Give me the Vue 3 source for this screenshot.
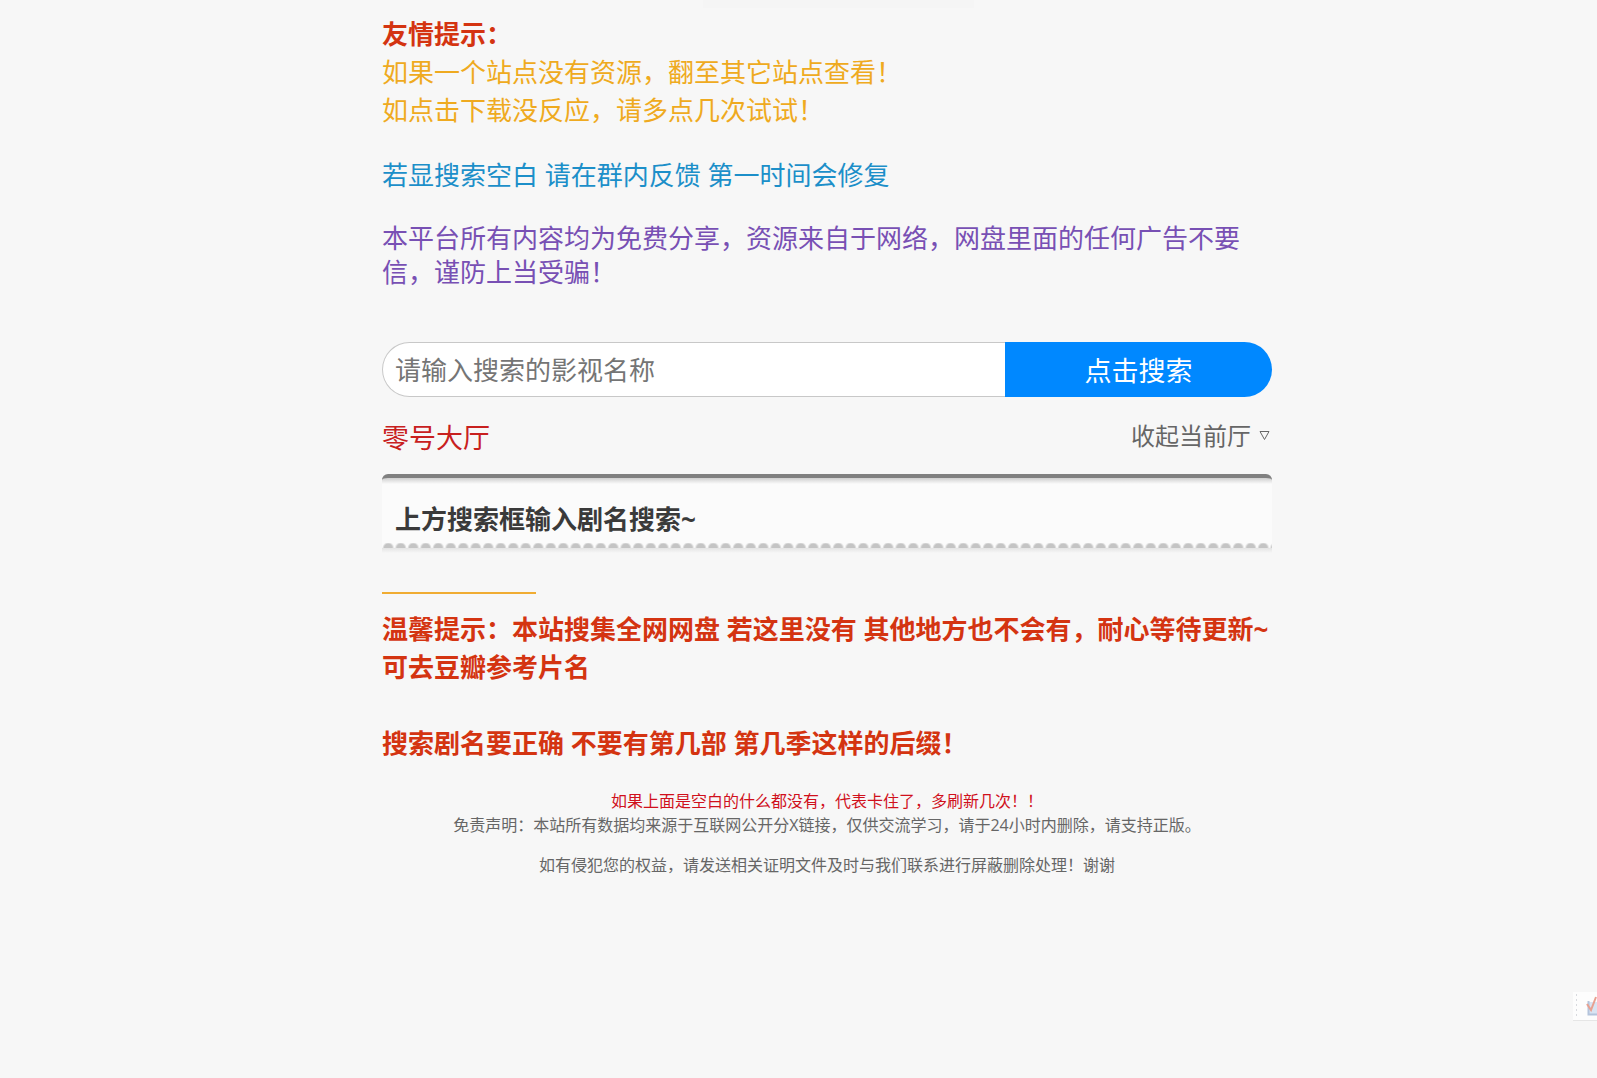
<script setup>
import { ref } from 'vue'

const keyword = ref('')
const open = ref(true)
</script>

<template>
  <div class="page" lang="zh-CN">
    <div class="top-bar" aria-hidden="true"></div>
    <main class="column">
      <section class="notice">
        <p class="tips">
          <strong class="red">友情提示：</strong><br />
          如果一个站点没有资源，翻至其它站点查看！<br />
          如点击下载没反应，请多点几次试试！
        </p>
        <p class="blue">若显搜索空白 请在群内反馈 第一时间会修复</p>
        <p class="purple">本平台所有内容均为免费分享，资源来自于网络，网盘里面的任何广告不要信，谨防上当受骗！</p>
      </section>

      <form class="search" @submit.prevent>
        <input v-model="keyword" type="text" aria-label="影视名称" placeholder="请输入搜索的影视名称" />
        <button type="submit">点击搜索</button>
      </form>

      <header class="hall">
        <h2>零号大厅</h2>
        <button type="button" class="toggle" :aria-expanded="open" @click="open = !open">
          收起当前厅
          <svg width="11" height="11" viewBox="0 0 11 11" fill="none" stroke="currentColor" aria-hidden="true">
            <path d="M1 1.5h9L5.500 9.500z" />
          </svg>
        </button>
      </header>

      <section v-show="open" class="ticket">
        <h3>上方搜索框输入剧名搜索~</h3>
        <div class="scallops"></div>
      </section>

      <hr class="rule" />

      <section class="reminder red">
        <p>温馨提示：本站搜集全网网盘 若这里没有 其他地方也不会有，耐心等待更新~<br />可去豆瓣参考片名</p>
        <p>搜索剧名要正确 不要有第几部 第几季这样的后缀！</p>
      </section>

      <footer class="legal">
        <p class="alert">如果上面是空白的什么都没有，代表卡住了，多刷新几次！！</p>
        <p>免责声明：本站所有数据均来源于互联网公开分X链接，仅供交流学习，请于24小时内删除，请支持正版。</p>
        <p class="contact">如有侵犯您的权益，请发送相关证明文件及时与我们联系进行屏蔽删除处理！谢谢</p>
      </footer>
    </main>

    <aside class="dock" aria-hidden="true">
      <svg width="24" height="28" viewBox="0 0 24 28" fill="none">
        <path d="M3.500 2v25" stroke="#d8dade" stroke-dasharray="2 3" />
        <path d="M16 10h8v13h-8z" fill="#d9e4f2" />
        <path d="M15.500 9v13.500H24" stroke="#b4c4dc" stroke-width="2" />
        <path d="M14 12l4 6 5-13" stroke="#e8a090" stroke-width="2" />
      </svg>
    </aside>
  </div>
</template>

<style>
body {
  margin: 0;
  background: #f7f7f7;
}
</style>

<style scoped>
.page {
  box-sizing: border-box;
  min-height: 100vh;
  padding: 15px 0 16px 57px;
  font-family: "Open Sans", "Noto Sans CJK SC", sans-serif;
  font-size: 26px;
  line-height: 34px;
  color: #666;
}

.column {
  max-width: 890px;
  margin: 0 auto;
}

p,
h2,
h3 {
  margin: 0;
}

.top-bar {
  position: absolute;
  top: 0;
  left: 44%;
  width: 17%;
  height: 8px;
  background: #f5f5f5;
}

.notice {
  display: flex;
  flex-direction: column;
  gap: 29px;
}

.tips {
  line-height: 38px;
  color: #efaa20;
}

.red {
  color: #d43411;
}

.tips strong,
.reminder {
  font-weight: 700;
}

.blue {
  color: #1c8fc9;
}

.purple {
  color: #7850b4;
}

.search {
  display: flex;
  height: 55px;
  margin-top: 53px;
}

.search input,
.search button {
  box-sizing: border-box;
  min-width: 0;
  font-family: inherit;
}

.search input {
  width: 70%;
  padding: 0 12px;
  border: 1px solid #c8c8c8;
  border-right: 0;
  border-radius: 28px 0 0 28px;
  background: #fff;
  font-size: 26px;
  color: #333;
  outline: none;
}

.search input::placeholder {
  color: #757575;
}

.search button {
  width: 30%;
  padding: 0;
  border: 0;
  border-radius: 0 28px 28px 0;
  background: #0088ff;
  font-size: 27px;
  color: #fff;
}

.hall {
  display: flex;
  justify-content: space-between;
  align-items: center;
  height: 77px;
}

.hall h2 {
  padding-top: 4px;
  font-size: 27px;
  font-weight: 400;
  color: #c8201e;
}

.toggle {
  display: flex;
  align-items: center;
  gap: 8px;
  padding: 0 2px 0 0;
  border: 0;
  background: none;
  font-family: inherit;
  font-size: 24px;
  line-height: 34px;
  color: #666;
}

.ticket {
  border-top: 4px solid #808080;
  border-radius: 6px 6px 0 0;
  background: linear-gradient(#cfcfcf, #fbfbfb 6px);
}

.ticket h3 {
  padding: 24px 13px 7px;
  font-size: 26px;
  font-weight: 700;
  color: #3a3a3a;
}

.scallops {
  height: 10px;
  background:
    linear-gradient(#f7f7f700 5px, #e4e4e4 5px, #f7f7f7),
    radial-gradient(circle at 50% 5px, #c4c4c4 4px, #fbfbfb 6px) 0 0 / calc(100% / 71.2) 10px;
}

.rule {
  width: 154px;
  height: 2px;
  margin: 39px 0 16px;
  border: 0;
  background: #f0ac32;
}

.reminder {
  display: flex;
  flex-direction: column;
  gap: 38px;
  line-height: 38px;
}

.legal {
  margin-top: 27px;
  font-size: 16px;
  line-height: 24px;
  text-align: center;
}

.alert {
  color: #d0101c;
}

.contact {
  margin-top: 16px;
}

.dock {
  position: fixed;
  right: 0;
  bottom: 57px;
  width: 24px;
  height: 28px;
  background: #fdfdfd;
  border-bottom: 1px solid #e6e6e6;
}
</style>
